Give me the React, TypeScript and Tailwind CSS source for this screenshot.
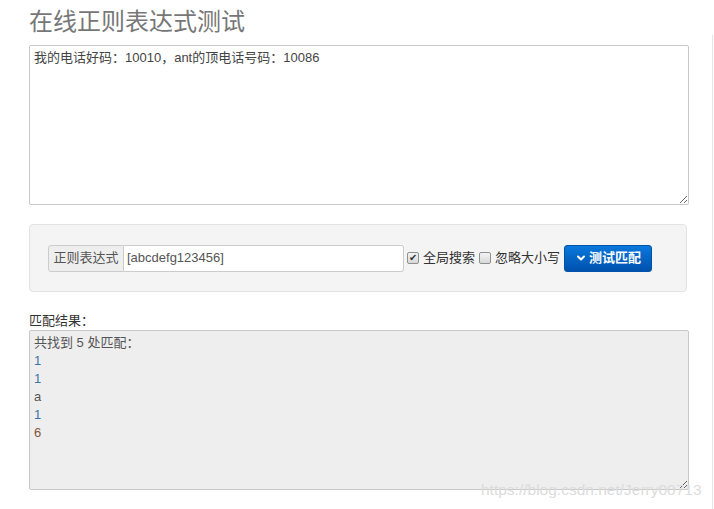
import { ChevronDown } from "lucide-react";

const font = { fontFamily: '"Liberation Sans", "Noto Sans CJK SC", sans-serif' };

const matches = [
  { text: "1", color: "text-[#3e73a8]" },
  { text: "1", color: "text-[#3e73a8]" },
  { text: "a", color: "text-[#555555]" },
  { text: "1", color: "text-[#3e73a8]" },
  { text: "6", color: "text-[#86533a]" },
];

function Check({ checked }: { checked?: boolean }) {
  return (
    <span className="w-[12px] h-[12px] border border-[#8f8f8f] rounded-[2px] bg-gradient-to-b from-[#f4f4f4] to-[#d8d8d8] flex items-center justify-center text-[10px] leading-none text-[#333]">
      {checked ? "✔" : ""}
    </span>
  );
}

export default function App() {
  return (
    <div className="relative w-[714px] h-[509px] bg-white overflow-hidden flex" style={font}>
      <div className="w-[712px] pl-[29px] pr-[25px]">
        <h1 className="text-[24px] leading-[30px] text-[#777] pt-[7px] pb-[8px]">在线正则表达式测试</h1>

        <textarea
          defaultValue="我的电话好码：10010，ant的顶电话号码：10086"
          className="block w-[660px] h-[160px] border border-[#c8c8c8] rounded-[2px] px-[4px] py-[3px] text-[13px] leading-[18px] text-[#444] outline-none"
          style={font}
        />

        <div className="mt-[19px] w-[658px] h-[68px] bg-[#f4f4f4] border border-[#e3e3e3] rounded-[4px] flex items-center px-[18px]">
          <div className="flex h-[27px]">
            <span className="w-[76px] flex items-center justify-center bg-[#eeeeee] border border-[#cccccc] rounded-l-[3px] text-[13px] text-[#555]">
              正则表达式
            </span>
            <span className="w-[280px] flex items-center px-[3px] bg-white border border-l-0 border-[#cccccc] rounded-r-[3px] text-[13px] text-[#555]">
              [abcdefg123456]
            </span>
          </div>
          <span className="ml-[3px]"><Check checked /></span>
          <span className="ml-[4px] text-[13px] text-[#333]">全局搜索</span>
          <span className="ml-[4px]"><Check /></span>
          <span className="ml-[4px] text-[13px] text-[#333]">忽略大小写</span>
          <button className="ml-[4px] w-[88px] h-[27px] rounded-[3px] border border-[#0052a8] bg-gradient-to-b from-[#0b78dd] to-[#0052ad] text-white text-[13px] font-bold flex items-center justify-center gap-[2px]">
            <ChevronDown size={12} strokeWidth={4} />
            测试匹配
          </button>
        </div>

        <div className="mt-[20px] text-[13px] leading-[18px] text-[#333]">匹配结果：</div>
        <div className="resize overflow-auto w-[660px] h-[160px] bg-[#eeeeee] border border-[#c8c8c8] rounded-[2px] px-[4px] pt-[3px] text-[13px] leading-[18px]">
          <div className="text-[#555]">共找到 5 处匹配：</div>
          {matches.map((m, i) => (
            <div key={i} className={m.color}>{m.text}</div>
          ))}
        </div>
      </div>
      <div className="mt-[35px] flex-1 border-l border-[#e4e4e4]" />

      <span className="absolute left-[481px] top-[480px] text-[15.5px] leading-[20px] text-[#dcdcdc] pointer-events-none">
        https://blog.csdn.net/Jerry00713
      </span>
    </div>
  );
}
